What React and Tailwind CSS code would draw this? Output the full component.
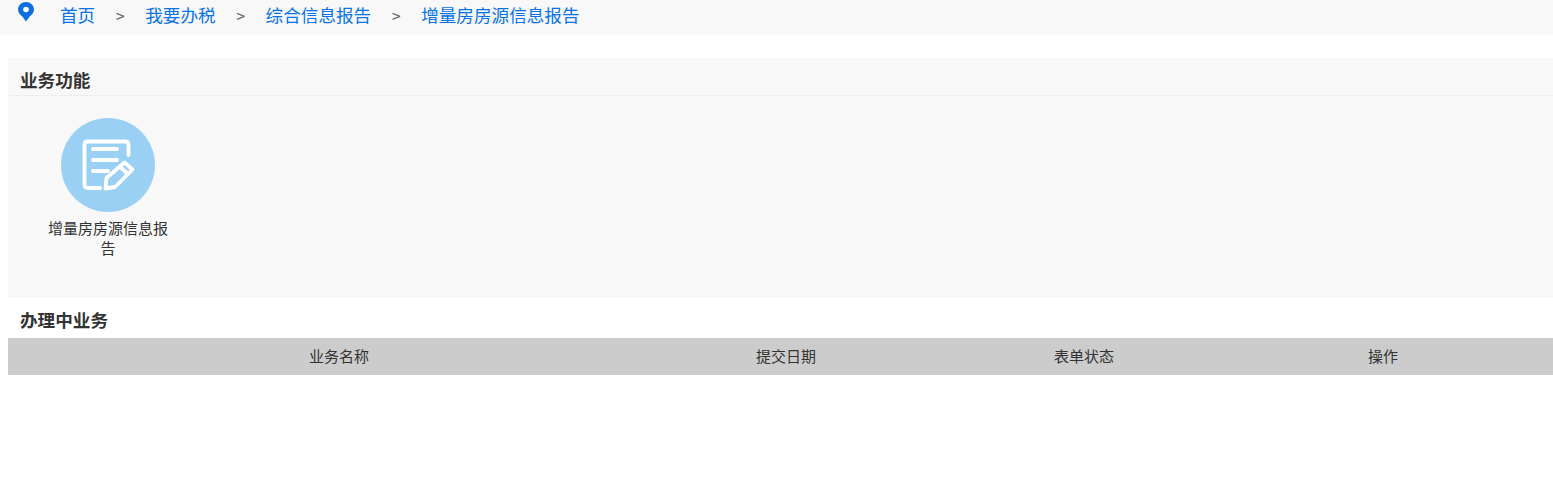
const crumbs = ['首页', '我要办税', '综合信息报告', '增量房房源信息报告'];
const columns = ['业务名称', '提交日期', '表单状态', '操作'];

function PinIcon() {
  return (
    <svg width="18" height="22" viewBox="0 0 18 22" className="block">
      <path
        d="M9 2C4.600 2 1 5.300 1 9.500c0 3 2 5 4.300 7L9 21.500l3.700-5C15 14.500 17 12.500 17 9.500 17 5.300 13.400 2 9 2z"
        fill="#0b6fe2"
      />
      <circle cx="9" cy="9.500" r="2.800" fill="#fff" />
    </svg>
  );
}

function ReportIcon() {
  return (
    <svg width="94" height="94" viewBox="0 0 94 94" fill="none" stroke="#fff" strokeWidth="3.800" strokeLinecap="round" strokeLinejoin="round">
      <path d="M39 70H27Q23.500 70 23.500 66.500V27Q23.500 23.500 27 23.500H64Q67.500 23.500 67.500 27V37" />
      <path d="M32 31H56" />
      <path d="M32 42H56" />
      <path d="M32 53H47" />
      <path d="M44.500 70.500L45.500 60L63.500 44.500L71.500 51.500L54 69Z" />
      <path d="M59 49L67 56" />
    </svg>
  );
}

export default function App() {
  return (
    <div className="min-h-[493px] bg-white font-['Noto_Sans_CJK_SC',sans-serif] text-[#333]">
      <nav className="flex h-[35px] items-start bg-[#f8f8f8] pl-[17px] text-[17.6px] leading-[30px]">
        <span className="mr-[25px]"><PinIcon /></span>
        {crumbs.map((crumb, index) => (
          <span key={crumb} className="flex">
            {index > 0 && <span className="w-[50px] text-center text-[16px] text-[#666]">&gt;</span>}
            <a className="text-[#0773e6]">{crumb}</a>
          </span>
        ))}
      </nav>

      <div className="pl-2 pt-[23px]">
        <section className="h-[240px] bg-[#f8f8f8]">
          <h2 className="h-[38px] border-b border-[#eeeeee] pl-3 text-[17.6px] font-bold leading-[44px]">业务功能</h2>
          <div className="ml-[30px] flex w-[140px] flex-col items-center px-[10px] pt-[22px]">
            <div className="size-[94px] rounded-full bg-[#9bd0f5]">
              <ReportIcon />
            </div>
            <p className="mt-[6px] w-[120px] text-center text-[15px] leading-[20px]">增量房房源信息报告</p>
          </div>
        </section>

        <h2 className="h-[40px] pl-3 text-[17.6px] font-bold leading-[44px]">办理中业务</h2>
        <div className="grid h-[37px] grid-cols-[662px_232px_364px_234px_1fr] items-center bg-[#cccccc] text-center text-[15px]">
          {columns.map((column) => (
            <span key={column}>{column}</span>
          ))}
        </div>
      </div>
    </div>
  );
}
